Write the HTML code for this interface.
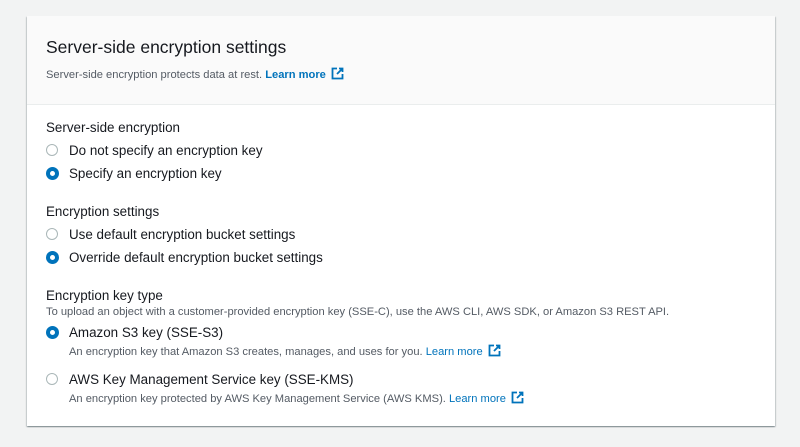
<!DOCTYPE html>
<html><head><style>
body{margin:0;width:800px;height:447px;background:#f2f3f3;font-family:"Liberation Sans",Arial,sans-serif;position:relative;overflow:hidden;color:#16191f}
.card{position:absolute;left:27px;top:16px;width:748px;height:410px;background:#fff;box-shadow:0 1px 1px rgba(0,28,36,.3),1px 1px 1px rgba(0,28,36,.15),-1px 1px 1px rgba(0,28,36,.15)}
.hdr{position:absolute;left:0;top:0;width:748px;height:88px;background:#fafafa;border-bottom:1px solid #eaeded}
.t{position:absolute;white-space:nowrap}
.h1{font-size:17.5px;left:19px;top:21px}
.sm{font-size:11.15px;color:#545b64}
.lbl{font-size:13.4px}
.lnk{color:#0073bb;font-weight:bold}
.lnk2{color:#0073bb}
.r{position:absolute;left:19px;width:10px;height:10px;border:1.5px solid #aab7b8;border-radius:50%;background:#fff}
.r.on{border:4px solid #0073bb;width:5px;height:5px}
svg{vertical-align:-2px;margin-left:5px}
</style></head><body>
<div class="card">
<div class="hdr"></div>
<div class="t h1">Server-side encryption settings</div>
<div class="t sm" style="left:19px;top:51px">Server-side encryption protects data at rest. <span class="lnk">Learn more</span><svg width="13" height="13" viewBox="0 0 13 13"><path d="M6 1.5H1.5v10h10V7M8 1.5h3.5V5M11.5 1.5L6 7" fill="none" stroke="#0073bb" stroke-width="1.8"/></svg></div>

<div class="t lbl" style="left:19px;top:104px">Server-side encryption</div>
<div class="r" style="top:128px"></div><div class="t lbl" style="left:42px;top:127px">Do not specify an encryption key</div>
<div class="r on" style="top:151px"></div><div class="t lbl" style="left:42px;top:150px">Specify an encryption key</div>

<div class="t lbl" style="left:19px;top:188px">Encryption settings</div>
<div class="r" style="top:212px"></div><div class="t lbl" style="left:42px;top:211px">Use default encryption bucket settings</div>
<div class="r on" style="top:235px"></div><div class="t lbl" style="left:42px;top:234px">Override default encryption bucket settings</div>

<div class="t lbl" style="left:19px;top:272px">Encryption key type</div>
<div class="t sm" style="left:19px;top:290px">To upload an object with a customer-provided encryption key (SSE-C), use the AWS CLI, AWS SDK, or Amazon S3 REST API.</div>
<div class="r on" style="top:310px"></div><div class="t lbl" style="left:42px;top:309px">Amazon S3 key (SSE-S3)</div>
<div class="t sm" style="left:42px;top:328px">An encryption key that Amazon S3 creates, manages, and uses for you. <span class="lnk2">Learn more</span><svg width="13" height="13" viewBox="0 0 13 13"><path d="M6 1.5H1.5v10h10V7M8 1.5h3.5V5M11.5 1.5L6 7" fill="none" stroke="#0073bb" stroke-width="1.8"/></svg></div>
<div class="r" style="top:357px"></div><div class="t lbl" style="left:42px;top:356px">AWS Key Management Service key (SSE-KMS)</div>
<div class="t sm" style="left:42px;top:375px">An encryption key protected by AWS Key Management Service (AWS KMS). <span class="lnk2">Learn more</span><svg width="13" height="13" viewBox="0 0 13 13"><path d="M6 1.5H1.5v10h10V7M8 1.5h3.5V5M11.5 1.5L6 7" fill="none" stroke="#0073bb" stroke-width="1.8"/></svg></div>
</div>
</body></html>
